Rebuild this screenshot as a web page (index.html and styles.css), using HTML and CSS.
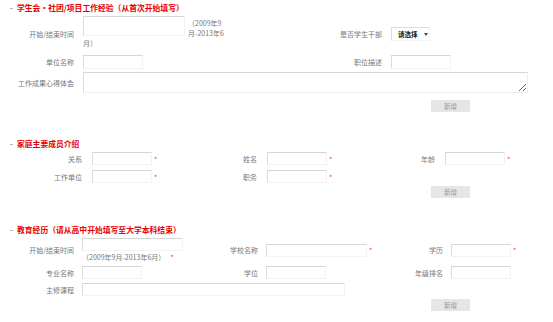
FILE: index.html
```html
<!DOCTYPE html>
<html lang="zh-CN">
<head>
    <meta charset="UTF-8">
    <meta name="viewport" content="width=device-width, initial-scale=1.0">
    <title>简历填写</title>
    <link rel="stylesheet" href="styles.css">
</head>
<body>
    <div class="page">
        <div class="section">
            <h3 class="title">学生会·社团/项目工作经验（从首次开始填写）</h3>
            <div class="grid grid-exp">
                <label class="lbl">开始/结束时间</label>
                <div class="period"><input type="text" class="ipt ipt-period">（2009年9月-2013年6月）</div>
                <label class="lbl">是否学生干部</label>
                <div class="field"><span class="pick">请选择<i class="caret"></i></span></div>

                <label class="lbl">单位名称</label>
                <div class="field"><input type="text" class="ipt"></div>
                <label class="lbl">职位描述</label>
                <div class="field"><input type="text" class="ipt"></div>

                <label class="lbl">工作成果心得体会</label>
                <div class="field span-3"><textarea class="memo"></textarea></div>
            </div>
            <div class="actions actions-wide"><button class="btn-add">新增</button></div>
        </div>

        <div class="section">
            <h3 class="title">家庭主要成员介绍</h3>
            <div class="grid grid-family">
                <label class="lbl">关系</label>
                <div class="field"><input type="text" class="ipt"><span class="star">*</span></div>
                <label class="lbl">姓名</label>
                <div class="field"><input type="text" class="ipt"><span class="star">*</span></div>
                <label class="lbl">年龄</label>
                <div class="field"><input type="text" class="ipt"><span class="star">*</span></div>

                <label class="lbl">工作单位</label>
                <div class="field"><input type="text" class="ipt"><span class="star">*</span></div>
                <label class="lbl">职务</label>
                <div class="field"><input type="text" class="ipt"><span class="star">*</span></div>
            </div>
            <div class="actions"><button class="btn-add">新增</button></div>
        </div>

        <div class="section">
            <h3 class="title">教育经历（请从高中开始填写至大学本科结束）</h3>
            <div class="grid grid-edu">
                <label class="lbl">开始/结束时间</label>
                <div class="period-edu">
                    <input type="text" class="ipt ipt-md">
                    <div class="hint">（2009年9月-2013年6月）<span class="star star-wide">*</span></div>
                </div>
                <label class="lbl">学校名称</label>
                <div class="field"><input type="text" class="ipt ipt-md"><span class="star">*</span></div>
                <label class="lbl">学历</label>
                <div class="field"><input type="text" class="ipt"><span class="star">*</span></div>

                <label class="lbl">专业名称</label>
                <div class="field"><input type="text" class="ipt"></div>
                <label class="lbl">学位</label>
                <div class="field"><input type="text" class="ipt"></div>
                <label class="lbl">年级排名</label>
                <div class="field"><input type="text" class="ipt"></div>

                <label class="lbl">主修课程</label>
                <div class="field span-3"><input type="text" class="ipt ipt-long"></div>
            </div>
            <div class="actions"><button class="btn-add">新增</button></div>
        </div>
    </div>
</body>
</html>
```

FILE: styles.css
```css
body {
    margin: 0;
    font-family: "Noto Sans CJK SC", "Noto Sans", sans-serif;
    font-size: 7px;
    color: #777;
    background: #fff;
}
.page {
    padding-top: 3px;
}
.section {
    margin-bottom: 27px;
}
.title {
    margin: 0 0 3px;
    padding-left: 10px;
    font-size: 7.8px;
    line-height: 10px;
    font-weight: bold;
    color: #e60000;
}
.title::before {
    content: "";
    display: inline-block;
    width: 3px;
    height: 1px;
    margin-right: 4px;
    vertical-align: middle;
    background: #c9b4b4;
}

.grid {
    display: grid;
    align-items: center;
}
.grid-exp {
    grid-template-columns: 74px 142px 148px 1fr;
    grid-template-rows: 36px auto auto;
    column-gap: 9px;
    row-gap: 3px;
}
.grid-family {
    grid-template-columns: 82px 68px 87px 68px 90px 1fr;
    column-gap: 10px;
    row-gap: 5px;
}
.grid-edu {
    grid-template-columns: 74px 108px 60px 114px 55px 1fr;
    column-gap: 8px;
    row-gap: 4px;
}
.lbl {
    text-align: right;
    white-space: nowrap;
    line-height: 10px;
}
.field {
    display: flex;
    align-items: center;
}
.span-3 {
    grid-column: span 3;
}

.ipt {
    box-sizing: border-box;
    width: 60px;
    height: 13px;
    margin: 0;
    padding: 0 2px;
    border: 1px solid;
    border-color: #d6d6d6 #f3f3f3 #f3f3f3 #dcdcdc;
    background: #fff;
    font-size: 7px;
}
.grid-exp .ipt {
    height: 14px;
}
.ipt-md {
    width: 101px;
}
.ipt-long {
    width: 263px;
}
.star {
    margin-left: 2px;
    color: #e4393c;
    line-height: 10px;
}
.star-wide {
    margin-left: 5px;
}

.period {
    align-self: start;
    padding-top: 2px;
    line-height: 10px;
}
.grid-exp .ipt-period {
    float: left;
    width: 102px;
    height: 20px;
    margin: -2px 3px 0 0;
}
.period-edu {
    align-self: start;
}
.period-edu .ipt {
    display: block;
}
.hint {
    line-height: 10px;
    margin-top: 1px;
}

.pick {
    display: inline-flex;
    align-items: center;
    box-sizing: border-box;
    width: 39px;
    height: 14px;
    padding-left: 6px;
    border: 1px solid;
    border-color: #ddd #f4f4f4 #f4f4f4 #ddd;
    font-size: 6.5px;
    font-weight: bold;
    color: #222;
}
.caret {
    width: 0;
    height: 0;
    margin-left: 6px;
    border-top: 3px solid #444;
    border-left: 2px solid transparent;
    border-right: 2px solid transparent;
}

.memo {
    display: block;
    box-sizing: border-box;
    width: 445px;
    height: 21px;
    margin: 0;
    border: 1px solid;
    border-color: #d6d6d6 #f0f0f0 #f0f0f0 #dcdcdc;
    font-size: 7px;
}

.actions {
    padding-top: 3px;
}
.actions-wide {
    padding-top: 7px;
}
.btn-add {
    display: block;
    width: 39px;
    height: 12px;
    margin-left: 431px;
    padding: 0;
    border: none;
    background: #e6e6e6;
    color: #999;
    font-family: inherit;
    font-size: 6.5px;
    line-height: 12px;
}
```
